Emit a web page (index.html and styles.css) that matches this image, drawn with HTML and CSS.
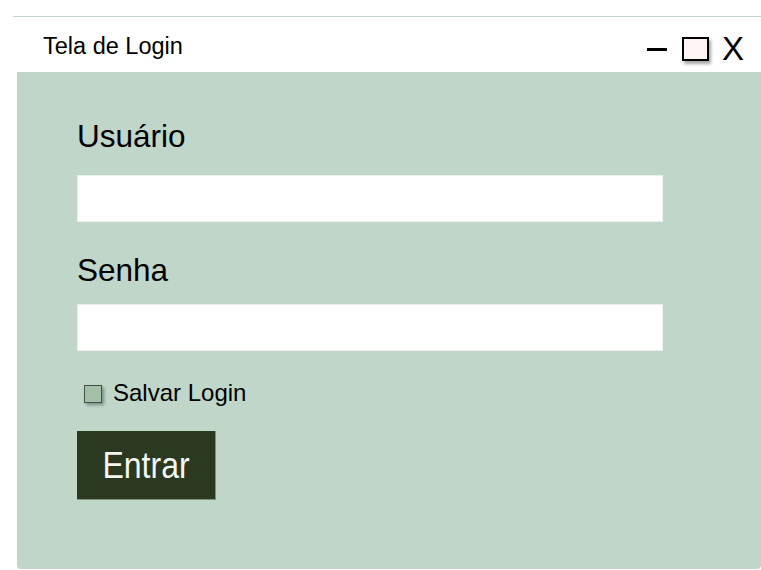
FILE: index.html
```html
<!DOCTYPE html>
<html lang="pt">
<head>
<meta charset="utf-8">
<title>Tela de Login</title>
<link rel="stylesheet" href="styles.css">
</head>
<body>
<div class="window">
  <div class="titlebar">
    <span class="title">Tela de Login</span>
    <div class="controls">
      <span class="ctl-min"></span>
      <span class="ctl-max"></span>
      <span class="ctl-close">X</span>
    </div>
  </div>
  <form class="panel">
    <label class="label">Usuário</label>
    <div class="field"></div>
    <label class="label label-second">Senha</label>
    <div class="field field-second"></div>
    <div class="check-row">
      <span class="checkbox"></span>
      <span class="check-text">Salvar Login</span>
    </div>
    <div class="button"><span class="button-text">Entrar</span></div>
  </form>
</div>
</body>
</html>
```

FILE: styles.css
```css
html, body {
  margin: 0;
  padding: 0;
  background: #ffffff;
}

body {
  font-family: "Liberation Sans", Arial, sans-serif;
  color: #000;
  width: 761px;
  height: 570px;
  overflow: hidden;
}

.window {
  margin-top: 16px;
  margin-left: 13px;
  border-top: 1px solid #bfd6c9;
}

.titlebar {
  height: 55px;
  display: flex;
  align-items: center;
  justify-content: space-between;
  padding-left: 30px;
  padding-right: 17px;
}

.title {
  font-size: 23.5px;
  line-height: 26px;
  padding-top: 2px;
}

.controls {
  display: flex;
  align-items: center;
  padding-top: 9px;
}

.ctl-min {
  display: block;
  width: 20px;
  height: 3px;
  background: #000;
  margin-right: 15px;
}

.ctl-max {
  display: block;
  width: 23px;
  height: 20px;
  border: 2px solid #000;
  background: #fff5f5;
  box-shadow: 2px 3px 3px rgba(0, 0, 0, 0.35);
  margin-right: 13px;
}

.ctl-close {
  display: block;
  font-size: 33px;
  line-height: 32px;
}

.panel {
  margin: 0 0 0 4px;
  height: 497px;
  box-sizing: border-box;
  background: #bfd6c9;
  border-radius: 0 0 4px 4px;
  padding: 47px 0 0 60px;
}

.label {
  display: block;
  font-size: 31.5px;
  line-height: 34px;
}

.label-second {
  margin-top: 31px;
}

.field {
  width: 586px;
  height: 47px;
  box-sizing: border-box;
  background: #ffffff;
  border: 1px solid #e9efeb;
  margin-top: 22px;
}

.field-second {
  margin-top: 17px;
}

.check-row {
  display: flex;
  align-items: flex-start;
  margin-top: 29px;
  height: 26px;
}

.checkbox {
  display: block;
  width: 18px;
  height: 18px;
  box-sizing: border-box;
  border: 1px solid #4a4f4a;
  background: #a3bfa8;
  box-shadow: 2px 2px 3px rgba(0, 0, 0, 0.35);
  margin: 5px 0 0 7px;
}

.check-text {
  font-size: 24px;
  line-height: 26px;
  margin-left: 11px;
}

.button {
  margin-top: 25px;
  width: 139px;
  height: 69px;
  box-sizing: border-box;
  background: #2a391f;
  border-right: 1px solid #7e9278;
  border-bottom: 1px solid #7e9278;
  display: flex;
  justify-content: center;
  align-items: center;
}

.button-text {
  display: block;
  color: #f4f6f2;
  font-size: 36px;
  line-height: 69px;
  transform: scaleX(0.89);
}
```
